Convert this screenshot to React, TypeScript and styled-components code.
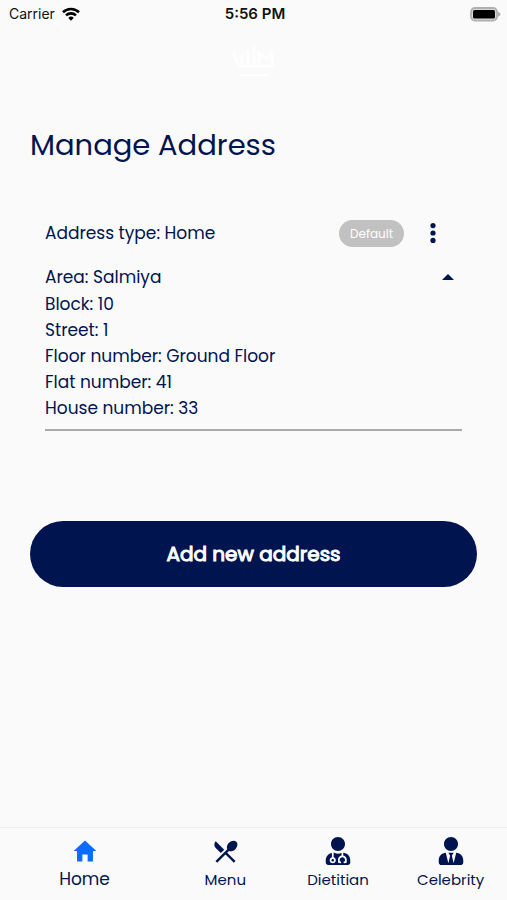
import React from "react";
import styled, { createGlobalStyle } from "styled-components";
import { FaUserMd, FaUserTie } from "react-icons/fa";
import { IoMdHome } from "react-icons/io";
import { MdRestaurantMenu } from "react-icons/md";

const navy = "#001450";

const GlobalStyle = createGlobalStyle`
  *, *::before, *::after { box-sizing: border-box; }
  body {
    margin: 0;
    background: #fafafa;
    color: ${navy};
    font-family: Poppins, Inter, sans-serif;
  }
  button { font: inherit; color: inherit; border: 0; background: none; padding: 0; cursor: pointer; }
  svg { display: block; }
`;

const Screen = styled.div`
  min-height: 100vh;
  display: flex;
  flex-direction: column;
`;

const StatusBar = styled.div`
  display: grid;
  grid-template-columns: 1fr auto 1fr;
  align-items: center;
  height: 28px;
  padding: 0 6px 0 9px;
  color: #111;
  font-family: Inter, sans-serif;
  font-size: 14px;
  line-height: 20px;
`;

const Carrier = styled.span`
  display: flex;
  align-items: center;
  gap: 7px;
`;

const Clock = styled.time`
  font-size: 15px;
  font-weight: 600;
`;

const Battery = styled.svg`
  justify-self: end;
`;

const Header = styled.header`
  display: flex;
  justify-content: center;
  padding: 16px 0;
`;

const Main = styled.main`
  flex: 1;
  padding: 27px 30px;
`;

const Title = styled.h1`
  margin: 0;
  font-size: 29px;
  line-height: 48px;
  font-weight: 400;
`;

const AddressCard = styled.article`
  margin: 50px 15px 0;
  padding-bottom: 8px;
  border-bottom: 2px solid #a9a9ab;
  font-size: 17px;
  line-height: 26px;
`;

const CardRow = styled.div`
  display: flex;
  align-items: center;
`;

const AddressType = styled.span`
  flex: 1;
`;

const Badge = styled.span`
  padding: 0 11px;
  border-radius: 14px;
  background: #c1c1c1;
  color: #fff;
  font-size: 12px;
  line-height: 27px;
`;

const IconButton = styled.button`
  display: grid;
  place-items: center;
  width: 28px;
  height: 28px;
`;

const MoreButton = styled(IconButton)`
  margin: 0 15px;
`;

const AreaRow = styled(CardRow)`
  justify-content: space-between;
  margin-top: 16px;
`;

const Details = styled.ul`
  margin: 0;
  padding: 0;
  list-style: none;
`;

const AddButton = styled.button`
  && {
    display: block;
    width: 100%;
    margin-top: 90px;
    padding: 20px;
    border-radius: 33px;
    background: ${navy};
    color: #fff;
    font-size: 20px;
    line-height: 26px;
    font-weight: 400;
    -webkit-text-stroke: 1px #fff;
  }
`;

const TabBar = styled.nav`
  display: grid;
  grid-template-columns: 3fr 2fr 2fr 2fr;
  height: 73px;
  border-top: 1px solid #eeeeee;
`;

const Tab = styled.a<{ $active?: boolean }>`
  display: flex;
  flex-direction: column;
  align-items: center;
  padding-top: 9px;
  color: ${navy};
  font-size: ${(p) => (p.$active ? 17 : 15)}px;
  line-height: 24px;
  text-decoration: none;
`;

const TabIcon = styled.span<{ $active?: boolean }>`
  display: grid;
  justify-items: center;
  height: ${(p) => (p.$active ? 30 : 31)}px;
  color: ${(p) => (p.$active ? "#0a6cff" : navy)};
`;

const details = [
  "Block: 10",
  "Street: 1",
  "Floor number: Ground Floor",
  "Flat number: 41",
  "House number: 33",
];

const tabs = [
  { label: "Home", icon: <IoMdHome size={28} />, active: true },
  { label: "Menu", icon: <MdRestaurantMenu size={29} /> },
  { label: "Dietitian", icon: <FaUserMd size={28} /> },
  { label: "Celebrity", icon: <FaUserTie size={28} /> },
];

export default function App() {
  return (
    <>
      <GlobalStyle />
      <Screen>
        <StatusBar>
          <Carrier>
            Carrier
            <svg width="18" height="14" viewBox="0 0 18 14" fill="none" stroke="#000" strokeWidth="2.6" aria-hidden="true">
              <path d="M1 5.2a11.5 11.5 0 0 1 16 0" />
              <path d="M4 8.4a7.2 7.2 0 0 1 10 0" />
              <path d="M6.3 10.9a3.9 3.9 0 0 1 5.4 0L9 13.7z" fill="#000" stroke="none" />
            </svg>
          </Carrier>
          <Clock>5:56 PM</Clock>
          <Battery width="31" height="15" viewBox="0 0 31 15" aria-hidden="true">
            <rect x="1" y="1" width="26" height="12.6" rx="4" fill="#d8d8d8" stroke="#b0b0b0" strokeWidth="1.8" />
            <rect x="3" y="3" width="22" height="8.6" rx="1.5" fill="#000" />
            <path d="M28 4.8v5q2.6-1.1 2.6-2.5T28 4.8z" fill="#b0b0b0" />
          </Battery>
        </StatusBar>
        <Header>
          <svg width="44" height="34" viewBox="0 0 44 34" fill="none" stroke="#fefefe" strokeWidth="3" strokeLinecap="round" aria-hidden="true">
            <path d="M2 9q3 13 8 13V11M16 22V7M22 22V2M27 22V9l7 6 6-6v13z" />
            <path d="M10 22h30M8 31h28" strokeWidth="2" />
          </svg>
        </Header>
        <Main>
          <Title>Manage Address</Title>
          <AddressCard>
            <CardRow>
              <AddressType>Address type: Home</AddressType>
              <Badge>Default</Badge>
              <MoreButton type="button" aria-label="Address options">
                <svg width="6" height="20" viewBox="0 0 6 20" fill={navy} aria-hidden="true">
                  <circle cx="3" cy="2.6" r="2.6" />
                  <circle cx="3" cy="10" r="2.6" />
                  <circle cx="3" cy="17.4" r="2.6" />
                </svg>
              </MoreButton>
            </CardRow>
            <AreaRow>
              <span>Area: Salmiya</span>
              <IconButton type="button" aria-label="Collapse address" aria-expanded="true">
                <svg width="12" height="6" viewBox="0 0 12 6" aria-hidden="true">
                  <path d="M0 6 6 0l6 6z" fill={navy} />
                </svg>
              </IconButton>
            </AreaRow>
            <Details>
              {details.map((line) => (
                <li key={line}>{line}</li>
              ))}
            </Details>
          </AddressCard>
          <AddButton type="button">Add new address</AddButton>
        </Main>
        <TabBar>
          {tabs.map((t) => (
            <Tab key={t.label} href={"#" + t.label.toLowerCase()} $active={t.active} aria-current={t.active ? "page" : undefined}>
              <TabIcon $active={t.active}>{t.icon}</TabIcon>
              {t.label}
            </Tab>
          ))}
        </TabBar>
      </Screen>
    </>
  );
}
